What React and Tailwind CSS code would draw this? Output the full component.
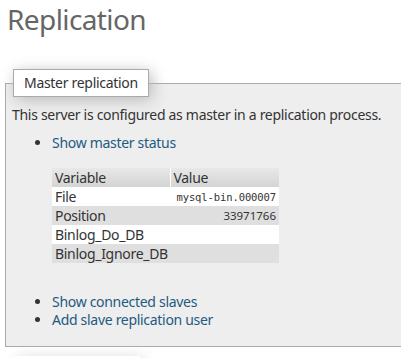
export default function App() {
  const rows = [
    ["File", "mysql-bin.000007", true],
    ["Position", "33971766", false],
    ["Binlog_Do_DB", "", false],
    ["Binlog_Ignore_DB", "", false],
  ];
  return (
    <div className="w-[401px] h-[358px] overflow-hidden bg-white text-[#333] text-[14px]" style={{ fontFamily: '"Noto Sans", "Open Sans", sans-serif' }}>
      <h2 className="text-[28px] leading-[36px] text-[#666] pl-[7px] pt-[1px] tracking-[-0.6px]">Replication</h2>
      <fieldset className="mt-[32px] ml-[5px] w-[430px] border border-[#aaa] bg-[#eee] pl-[6px] pr-2 pb-[17px] pt-0">
        <legend className="ml-[1px] bg-white border border-[#aaa] px-[10px] h-[28px] leading-[26px] shadow-[3px_3px_15px_#bbb] text-[14px] tracking-[-0.3px]">Master replication</legend>
        <p className="mt-[8px] leading-[20px] tracking-[-0.3px] whitespace-nowrap">This server is configured as master in a replication process.</p>
        <ul className="list-disc pl-[40px] mt-[9px] leading-[18px] marker:text-[#333]">
          <li className="text-[#235a81] tracking-[-0.3px]">Show master status</li>
        </ul>
        <div className="pl-[40px] mt-[16px]">
          <table className="w-[227px] table-fixed border-collapse text-[14px] leading-[18px] tracking-[-0.3px]">
            <thead>
              <tr>
                <th className="w-[118px] text-left font-normal px-[3px] py-0 h-[19px] bg-gradient-to-b from-[#e8e8e8] to-[#d4d4d4] border-r border-white">Variable</th>
                <th className="text-left font-normal px-[3px] py-0 h-[19px] bg-gradient-to-b from-[#e8e8e8] to-[#d4d4d4]">Value</th>
              </tr>
            </thead>
            <tbody>
              {rows.map(([k, v, mono], i) => (
                <tr key={k} className={i % 2 === 0 ? "bg-white" : "bg-[#dfdfdf]"}>
                  <td className="px-[3px] py-0 h-[19px] whitespace-nowrap">{k}</td>
                  <td className="pl-[2px] pr-[3px] py-0 h-[19px] text-right whitespace-nowrap">
                    {mono ? (
                      <span className="text-[10.5px] tracking-[-0.1px]" style={{ fontFamily: '"DejaVu Sans Mono", monospace' }}>{v}</span>
                    ) : (
                      <span className="text-[11.5px] tracking-normal">{v}</span>
                    )}
                  </td>
                </tr>
              ))}
            </tbody>
          </table>
        </div>
        <ul className="list-disc pl-[40px] mt-[30px] leading-[18px] text-[#235a81] marker:text-[#333]">
          <li className="tracking-[-0.3px]">Show connected slaves</li>
          <li className="tracking-[-0.3px]">Add slave replication user</li>
        </ul>
      </fieldset>
      <div className="ml-[15px] mt-[9px] w-[125px] h-[10px] bg-white shadow-[3px_3px_15px_#ccc]"></div>
    </div>
  );
}
